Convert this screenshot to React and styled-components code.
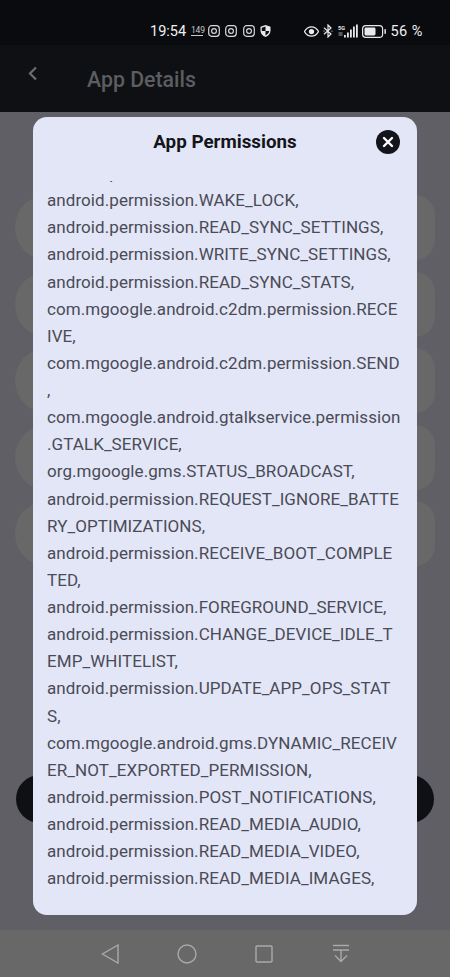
import { createGlobalStyle, styled } from 'styled-components';

const GlobalStyle = createGlobalStyle`
	html, body {
		margin: 0;
		padding: 0;
		background: #5f5f65;
	}

	body {
		font-family: Roboto, "Liberation Sans", sans-serif;
	}
`;

const Screen = styled.div`
	position: relative;
	display: flex;
	flex-direction: column;
	width: 450px;
	height: 977px;
	overflow: hidden;
`;

const StatusBar = styled.div`
	display: flex;
	align-items: center;
	height: 45px;
	padding: 17px 0 0 150px;
	box-sizing: border-box;
	background: #0a0b0f;
	color: #f0f0f0;
`;

const StatusTime = styled.span`
	width: 36px;
	font-size: 14.5px;
	margin-right: 5px;
`;

const StatusCount = styled.span`
	width: 12px;
	font-size: 8.5px;
	letter-spacing: -0.2px;
	line-height: 9px;
	margin-right: 5px;
	text-align: center;
	color: #c8c8c8;
	border-bottom: 1px solid #c8c8c8;
`;

const StatusGroup = styled.div`
	display: flex;
	align-items: center;
	gap: ${(props) => `${props.gap}px`};
	margin-left: ${(props) => `${props.offset || 0}px`};
`;

const StatusPercent = styled.span`
	font-size: 14.5px;
	letter-spacing: 0.5px;
	margin-left: 4px;
	white-space: nowrap;
`;

const Header = styled.div`
	display: flex;
	align-items: center;
	height: 67px;
	padding: 0 0 0 28px;
	box-sizing: border-box;
	background: #0f1014;
`;

const BackButton = styled.div`
	display: flex;
	width: 59px;
	margin-top: -11px;
`;

const HeaderTitle = styled.h1`
	margin: 2px 0 0;
	font-size: 21.3px;
	font-weight: 500;
	color: #5c5d60;
`;

const Body = styled.div`
	flex: 1;
	display: flex;
	flex-direction: column;
	padding: 83px 15px 0 15px;
	background: #5f5f65;
`;

const RowList = styled.div`
	display: flex;
	flex-direction: column;
	gap: 11.5px;
`;

const Row = styled.div`
	height: 65px;
	border-radius: 32px 20px 20px 32px;
	background: #686868;
`;

const DarkButton = styled.div`
	height: 48px;
	margin: 209px 1px 0;
	border-radius: 24px;
	background: #0f1014;
`;

const NavBar = styled.div`
	display: flex;
	align-items: center;
	justify-content: center;
	height: 47px;
	background: #686868;
`;

const NavSlot = styled.div`
	display: flex;
	align-items: center;
	justify-content: center;
	width: 77px;
`;

const Modal = styled.div`
	position: absolute;
	top: 117px;
	left: 33px;
	width: 384px;
	height: 798px;
	display: flex;
	flex-direction: column;
	border-radius: 14px;
	background: #e3e6f6;
	overflow: hidden;
`;

const ModalHeader = styled.div`
	position: relative;
	display: flex;
	justify-content: center;
	height: 64px;
	padding-top: 14px;
	box-sizing: border-box;
	flex-shrink: 0;
`;

const ModalTitle = styled.h2`
	margin: 0;
	font-size: 18.8px;
	line-height: 22px;
	font-weight: 700;
	color: #14151a;
`;

const CloseButton = styled.div`
	position: absolute;
	top: 13px;
	right: 17px;
	display: flex;
	align-items: center;
	justify-content: center;
	width: 24px;
	height: 24px;
	border-radius: 50%;
	background: #14151a;
`;

const PermissionList = styled.div`
	flex: 1;
	overflow: hidden;
	padding: 0 14px;
	font-size: 17px;
	line-height: 27.12px;
	letter-spacing: 0.07px;
	color: #4a4b57;
`;

const PermissionLine = styled.div`
	white-space: nowrap;
	margin-top: ${(props) => (props.$clipped ? '-21px' : '0')};
`;

const lines = [
	'android.permission',
	'android.permission.WAKE_LOCK,',
	'android.permission.READ_SYNC_SETTINGS,',
	'android.permission.WRITE_SYNC_SETTINGS,',
	'android.permission.READ_SYNC_STATS,',
	'com.mgoogle.android.c2dm.permission.RECE',
	'IVE,',
	'com.mgoogle.android.c2dm.permission.SEND',
	',',
	'com.mgoogle.android.gtalkservice.permission',
	'.GTALK_SERVICE,',
	'org.mgoogle.gms.STATUS_BROADCAST,',
	'android.permission.REQUEST_IGNORE_BATTE',
	'RY_OPTIMIZATIONS,',
	'android.permission.RECEIVE_BOOT_COMPLE',
	'TED,',
	'android.permission.FOREGROUND_SERVICE,',
	'android.permission.CHANGE_DEVICE_IDLE_T',
	'EMP_WHITELIST,',
	'android.permission.UPDATE_APP_OPS_STAT',
	'S,',
	'com.mgoogle.android.gms.DYNAMIC_RECEIV',
	'ER_NOT_EXPORTED_PERMISSION,',
	'android.permission.POST_NOTIFICATIONS,',
	'android.permission.READ_MEDIA_AUDIO,',
	'android.permission.READ_MEDIA_VIDEO,',
	'android.permission.READ_MEDIA_IMAGES,',
];

const InstagramIcon = () => (
	<svg width='12' height='12' viewBox='0 0 12 12' fill='none' stroke='#d8d8d8' strokeWidth='1.2'>
		<rect x='0.7' y='0.7' width='10.6' height='10.6' rx='3' />
		<circle cx='6' cy='6' r='2.4' />
	</svg>
);

const ShieldIcon = () => (
	<svg width='11' height='12' viewBox='0 0 11 12'>
		<path d='M5.5 0 L10.5 1.8 V5.5 C10.5 8.6 8.4 10.8 5.5 12 C2.6 10.8 0.5 8.6 0.5 5.5 V1.8 Z' fill='#e8e8e8' />
		<path d='M5.5 1.5 V6 H1.8 V2.7 Z M5.5 6 H9.2 C9 8 7.6 9.5 5.5 10.4 Z' fill='#0a0b0f' />
	</svg>
);

const EyeIcon = () => (
	<svg width='15' height='11' viewBox='0 0 16 11'>
		<path d='M0.5 5.5 C2.5 2 5 0.5 8 0.5 C11 0.5 13.5 2 15.5 5.5 C13.5 9 11 10.5 8 10.5 C5 10.5 2.5 9 0.5 5.5 Z' fill='none' stroke='#ececec' strokeWidth='1.3' />
		<circle cx='8' cy='5.5' r='2.8' fill='#ececec' />
	</svg>
);

const BluetoothIcon = () => (
	<svg width='10' height='14' viewBox='0 0 10 14' fill='none' stroke='#e8e8e8' strokeWidth='1.2'>
		<path d='M1 3.8 L8 10 L5 13 V1 L8 4 L1 10.2' />
		<circle cx='1' cy='7' r='0.6' fill='#e8e8e8' stroke='none' />
		<circle cx='9' cy='7' r='0.6' fill='#e8e8e8' stroke='none' />
	</svg>
);

const SignalIcon = () => (
	<svg width='20' height='14' viewBox='0 0 20 14' fill='#e8e8e8'>
		<text x='0' y='5.5' fontSize='5.5' fontWeight='700' fontFamily='Roboto, sans-serif'>5G</text>
		<rect x='0.5' y='8' width='4' height='4' fill='#55565a' />
		<rect x='6' y='11' width='1.8' height='2.5' />
		<rect x='9' y='8.5' width='1.8' height='5' />
		<rect x='12' y='5.5' width='1.8' height='8' />
		<rect x='15' y='2.5' width='1.8' height='11' />
		<rect x='18' y='0.5' width='1.8' height='13' />
	</svg>
);

const BatteryIcon = () => (
	<svg width='24' height='13' viewBox='0 0 24 13' fill='none'>
		<rect x='0.6' y='0.6' width='20' height='11.8' rx='3.2' stroke='#e8e8e8' strokeWidth='1.2' />
		<rect x='2.5' y='2.5' width='11' height='8' rx='1.4' fill='#e8e8e8' />
		<rect x='22.4' y='4' width='1.5' height='5' rx='0.7' fill='#e8e8e8' />
	</svg>
);

const App = () => {
	return (
		<Screen>
			<GlobalStyle />
			<StatusBar>
				<StatusTime>19:54</StatusTime>
				<StatusCount>149</StatusCount>
				<StatusGroup gap={5.3}>
					<InstagramIcon />
					<InstagramIcon />
					<InstagramIcon />
					<ShieldIcon />
				</StatusGroup>
				<StatusGroup gap={4.5} offset={33}>
					<EyeIcon />
					<BluetoothIcon />
					<SignalIcon />
					<BatteryIcon />
				</StatusGroup>
				<StatusPercent>56 %</StatusPercent>
			</StatusBar>
			<Header>
				<BackButton>
					<svg width='10' height='15' viewBox='0 0 10 15' fill='none' stroke='#6b6c70' strokeWidth='2.2'>
						<path d='M8 1.5 L2 7.5 L8 13.5' />
					</svg>
				</BackButton>
				<HeaderTitle>App Details</HeaderTitle>
			</Header>
			<Body>
				<RowList>
					<Row />
					<Row />
					<Row />
					<Row />
					<Row />
				</RowList>
				<DarkButton />
			</Body>
			<NavBar>
				<NavSlot>
					<svg width='18' height='20' viewBox='0 0 18 20' fill='none' stroke='#a9a9a9' strokeWidth='1.4'>
						<path d='M17 1 L1.5 10 L17 19 Z' />
					</svg>
				</NavSlot>
				<NavSlot>
					<svg width='20' height='20' viewBox='0 0 20 20' fill='none' stroke='#a9a9a9' strokeWidth='1.4'>
						<circle cx='10' cy='10' r='9' />
					</svg>
				</NavSlot>
				<NavSlot>
					<svg width='18' height='18' viewBox='0 0 18 18' fill='none' stroke='#a9a9a9' strokeWidth='1.4'>
						<rect x='1' y='1' width='16' height='16' rx='1' />
					</svg>
				</NavSlot>
				<NavSlot>
					<svg width='18' height='19' viewBox='0 0 18 19' fill='none' stroke='#a9a9a9' strokeWidth='1.4'>
						<path d='M1 1.5 H17 M1 6 H17 M9 6 V17.5 M3 11.5 L9 17.5 L15 11.5' />
					</svg>
				</NavSlot>
			</NavBar>
			<Modal>
				<ModalHeader>
					<ModalTitle>App Permissions</ModalTitle>
					<CloseButton>
						<svg width='12' height='12' viewBox='0 0 12 12' fill='none' stroke='#ffffff' strokeWidth='2.4' strokeLinecap='round'>
							<path d='M2 2 L10 10 M10 2 L2 10' />
						</svg>
					</CloseButton>
				</ModalHeader>
				<PermissionList>
					{lines.map((line, index) => (
						<PermissionLine key={index} $clipped={index === 0}>
							{line}
						</PermissionLine>
					))}
				</PermissionList>
			</Modal>
		</Screen>
	);
};

export default App;
